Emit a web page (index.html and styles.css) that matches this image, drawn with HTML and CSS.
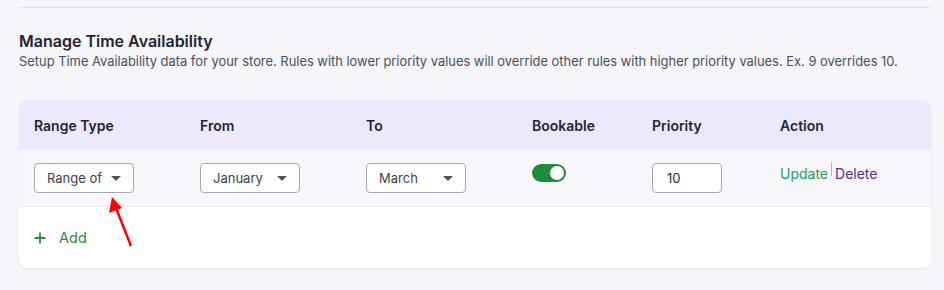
FILE: index.html
```html
<!DOCTYPE html>
<html lang="en">
<head>
    <meta charset="UTF-8">
    <title>Manage Time Availability</title>
    <link rel="stylesheet" href="styles.css">
</head>
<body>
    <div class="page">
        <hr class="divider">

        <div class="section-head">
            <h2>Manage Time Availability</h2>
            <p>Setup Time Availability data for your store. Rules with lower priority values will override other rules with higher priority values. Ex. 9 overrides 10.</p>
        </div>

        <div class="card">
            <table class="avail-table">
                <thead>
                    <tr>
                        <th class="col-type">Range Type</th>
                        <th class="col-from">From</th>
                        <th class="col-to">To</th>
                        <th class="col-book">Bookable</th>
                        <th class="col-prio">Priority</th>
                        <th>Action</th>
                    </tr>
                </thead>
                <tbody>
                    <tr>
                        <td><div class="select">Range of <span class="caret"></span></div></td>
                        <td><div class="select">January <span class="caret"></span></div></td>
                        <td><div class="select">March <span class="caret"></span></div></td>
                        <td><span class="toggle"><span class="knob"></span></span></td>
                        <td><input class="prio-input" type="text" value="10"></td>
                        <td class="actions"><a class="update">Update</a><span class="sep"></span><a class="delete">Delete</a></td>
                    </tr>
                </tbody>
            </table>
            <div class="add-row">
                <svg class="plus" width="12" height="12" viewBox="0 0 12 12">
                    <path d="M6 0.5v11M0.5 6h11" stroke="#22913a" stroke-width="1.8"/>
                </svg>
                Add
            </div>
        </div>

        <svg class="arrow" width="40" height="60" viewBox="0 0 40 60">
            <line x1="33" y1="53" x2="18" y2="15" stroke="#f00" stroke-width="2.5"/>
            <polygon points="14,4 11,20 24,15" fill="#f00"/>
        </svg>
    </div>
</body>
</html>
```

FILE: styles.css
```css
* {
    box-sizing: border-box;
}
body {
    margin: 0;
    background: #f6f6fa;
    font-family: Inter, "Noto Sans", sans-serif;
    color: #1f2430;
}
.page {
    position: relative;
    padding: 0 13px 0 19px;
    height: 290px;
}
.divider {
    margin: 0;
    padding-top: 7px;
    border: none;
    border-bottom: 1px solid #e2e2e8;
}
.section-head {
    padding-top: 22px;
}
.section-head h2 {
    margin: 0;
    font-size: 16px;
    font-weight: 600;
    line-height: 22px;
    color: #1f2430;
}
.section-head p {
    margin: 0;
    font-size: 12.9px;
    line-height: 20px;
    color: #4b4f5c;
}
.card {
    margin-top: 28px;
    background: #fff;
    border-radius: 8px;
    overflow: hidden;
    box-shadow: 0 1px 2px rgba(0,0,0,0.08);
}
.avail-table {
    width: 100%;
    border-collapse: collapse;
}
.avail-table th {
    background: #ede9fd;
    height: 50px;
    text-align: left;
    font-size: 14px;
    font-weight: 600;
    color: #23262f;
    padding: 0 0 0 15px;
}
.avail-table th + th {
    padding-left: 0;
}
.col-type { width: 181px; }
.col-from, .col-to { width: 166px; }
.col-book { width: 120px; }
.col-prio { width: 128px; }
.avail-table td {
    background: #f7f7fb;
    height: 56px;
    padding: 1px 0 0;
    border-bottom: 1px solid #ececf2;
    vertical-align: middle;
}
.avail-table td:first-child {
    padding-left: 15px;
}
.select {
    width: 100px;
    height: 30px;
    border: 1px solid #a7a9b0;
    border-radius: 4px;
    background: #fff;
    display: flex;
    align-items: center;
    justify-content: space-between;
    padding: 0 12px 0 12px;
    font-size: 13px;
    color: #3c3f49;
}
.caret {
    width: 0;
    height: 0;
    border-left: 5px solid transparent;
    border-right: 5px solid transparent;
    border-top: 5px solid #50535c;
}
.toggle {
    display: flex;
    align-items: center;
    justify-content: flex-end;
    width: 34px;
    height: 18px;
    border-radius: 9px;
    background: #1e8c3a;
    padding: 0 2px;
    margin-top: -10px;
}
.knob {
    width: 14px;
    height: 14px;
    border-radius: 50%;
    background: #fff;
}
.prio-input {
    width: 70px;
    height: 30px;
    border: 1px solid #a7a9b0;
    border-radius: 4px;
    padding: 0 14px;
    font-family: Inter, "Noto Sans", sans-serif;
    font-size: 13px;
    color: #2a2d36;
    background: #fff;
}
.actions {
    font-size: 14px;
    vertical-align: middle;
}
.actions a {
    position: relative;
    top: -5px;
}
.update {
    color: #2f9a55;
}
.delete {
    color: #5a2f90;
}
.sep {
    display: inline-block;
    width: 1px;
    height: 14px;
    background: #b5b5bb;
    margin: 0 3px;
    position: relative;
    top: -8px;
}
.add-row {
    height: 61px;
    display: flex;
    align-items: center;
    padding-left: 15px;
    font-size: 14.5px;
    color: #2c8c3e;
}
.plus {
    margin-right: 13px;
    margin-top: 1px;
}
.arrow {
    position: absolute;
    left: 98px;
    top: 193px;
}
```
